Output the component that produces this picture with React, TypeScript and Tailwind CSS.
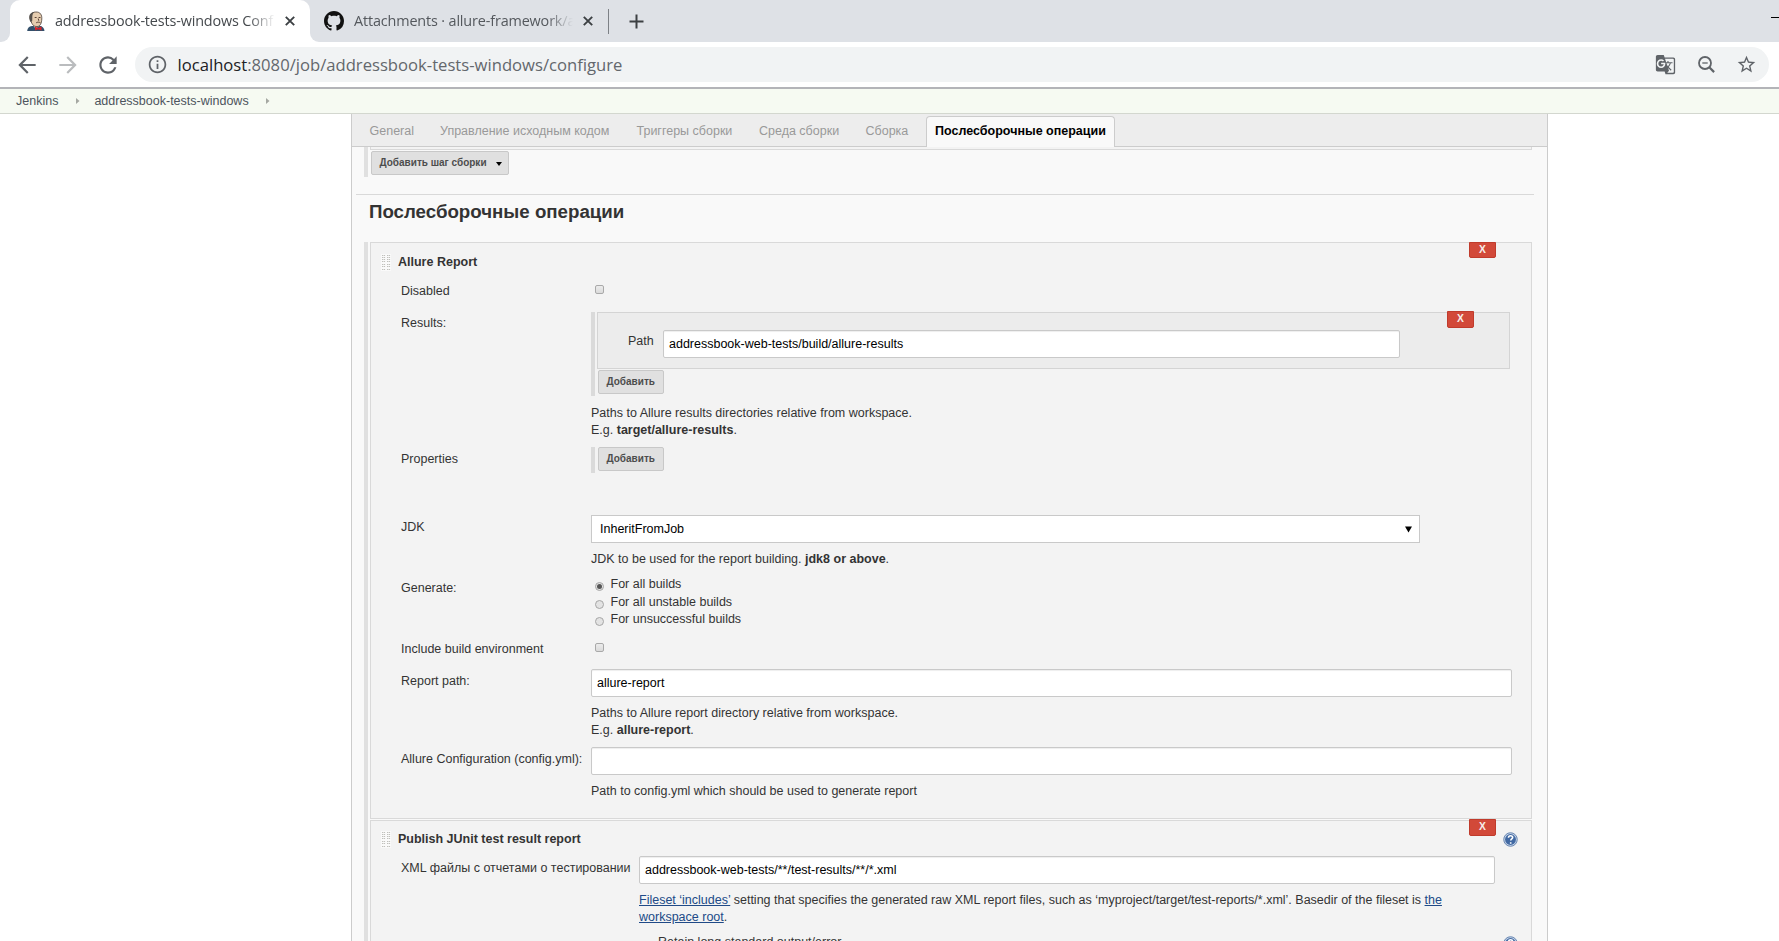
import type { ReactNode } from "react";
import {
  MdArrowBack,
  MdArrowForward,
  MdGTranslate,
  MdInfoOutline,
  MdRefresh,
  MdStarBorder,
} from "react-icons/md";

function GithubMark() {
  return (
    <svg viewBox="0 0 16 16" className="size-5 shrink-0" fill="#111">
      <path d="M8 0C3.58 0 0 3.58 0 8c0 3.54 2.29 6.53 5.47 7.59.4.07.55-.17.55-.38 0-.19-.01-.82-.01-1.49-2.01.37-2.53-.49-2.69-.94-.09-.23-.48-.94-.82-1.13-.28-.15-.68-.52-.01-.53.63-.01 1.08.58 1.23.82.72 1.21 1.87.87 2.33.66.07-.52.28-.87.51-1.07-1.78-.2-3.64-.89-3.64-3.95 0-.87.31-1.59.82-2.15-.08-.2-.36-1.02.08-2.12 0 0 .67-.21 2.2.82.64-.18 1.32-.27 2-.27.68 0 1.36.09 2 .27 1.53-1.04 2.2-.82 2.2-.82.44 1.1.16 1.92.08 2.12.51.56.82 1.27.82 2.15 0 3.07-1.87 3.75-3.65 3.95.29.25.54.73.54 1.48 0 1.07-.01 1.93-.01 2.2 0 .21.15.46.55.38A8.013 8.013 0 0016 8c0-4.42-3.58-8-8-8z" />
    </svg>
  );
}

function JenkinsIcon() {
  return (
    <svg viewBox="0 0 20 20" className="size-5 shrink-0">
      <path d="M1.200 20c.2-3 1.800-4.400 4.800-5l7.500-.3c3 .4 4.800 2.200 5 5.300z" fill="#34506b" />
      <path d="M6.500 13.500l3 4 4-2.500-1-3z" fill="#f0e6da" />
      <path d="M4.800 9.500C3.500 5 5 1.200 9.800 1c4.600-.2 6.200 3 6 7-.2 4-1.500 7.600-4.800 7.600-3.300 0-5-2-6.200-6.100z" fill="#e6cdb0" stroke="#4a3c34" strokeWidth=".8" />
      <path d="M4.600 11C1.800 6 3.200 1.500 8.500.7 6.800 2.200 6.200 3.800 6.300 6.500L6.200 10z" fill="#55504c" />
      <path d="M8.700 6.500h1.900M12.600 6.500h1.900M10.200 11.800c1.300-.9 2.800-.8 4.200-.1M12.200 7.500l.6 2.300" stroke="#5a4033" strokeWidth="1" fill="none" />
      <path d="M9 15.600l3 1.300 3.500-1.300v4L12 18.300l-3 1.300z" fill="#d8232a" />
    </svg>
  );
}

function CloseIcon({ className }: { className: string }) {
  return (
    <svg viewBox="0 0 10 10" className={`size-[10px] shrink-0 ${className}`}>
      <path d="M.8.8l8.400 8.400M9.200.8L.8 9.200" stroke="#3c4043" strokeWidth="1.900" />
    </svg>
  );
}

function PlusIcon({ className }: { className: string }) {
  return (
    <svg viewBox="0 0 15 15" className={`size-[15px] shrink-0 ${className}`}>
      <path d="M7.500.5v14M.5 7.500h14" stroke="#3c4043" strokeWidth="2" />
    </svg>
  );
}

function ZoomOutIcon({ className }: { className: string }) {
  return (
    <svg viewBox="0 0 17 17" className={`h-[17px] w-[17px] ${className}`} fill="none" stroke="currentColor">
      <circle cx="7" cy="7" r="6" strokeWidth="1.800" />
      <path d="M4.300 7h5.400" strokeWidth="1.300" />
      <path d="M11.300 11.300l4.800 4.800" strokeWidth="2.200" />
    </svg>
  );
}

function HelpIcon() {
  return (
    <svg viewBox="0 0 16 16" className="size-[15px]">
      <circle cx="8" cy="8" r="7.200" fill="#c9d6e8" stroke="#5f7fad" strokeWidth="1" />
      <circle cx="8" cy="8" r="5.800" fill="#4169a3" />
      <path d="M5.800 6.200c.1-1.500 1-2.200 2.300-2.200 1.300 0 2.200.7 2.200 1.900 0 1.500-2 1.600-2 3.200M8.200 10.800v1.600" fill="none" stroke="#fff" strokeWidth="1.700" />
    </svg>
  );
}

function Browser() {
  return (
    <header className="shrink-0">
      <div className="flex h-[42px] items-stretch bg-[#dee1e6] font-['Open_Sans',sans-serif] text-[14.4px] tracking-[-0.01em]">
        <div className="w-[10px] bg-white">
          <div className="h-full rounded-br-[9px] bg-[#dee1e6]" />
        </div>
        <div className="flex w-[300px] items-center rounded-t-[10px] bg-white pl-4 text-[#45494d]">
          <JenkinsIcon />
          <span className="-mt-px ml-[9px] w-[220px] overflow-hidden whitespace-nowrap [mask-image:linear-gradient(to_right,black_88%,transparent)]">
            addressbook-tests-windows Conf
          </span>
          <CloseIcon className="ml-[10px]" />
        </div>
        <div className="w-[10px] bg-white">
          <div className="h-full rounded-bl-[9px] bg-[#dee1e6]" />
        </div>
        <div className="flex items-center pl-1 text-[#54585d]">
          <GithubMark />
          <span className="-mt-px ml-[10px] w-[219px] overflow-hidden whitespace-nowrap [mask-image:linear-gradient(to_right,black_88%,transparent)]">
            Attachments · allure-framework/a
          </span>
          <CloseIcon className="ml-[10px]" />
          <div className="ml-[15px] h-[25px] w-px bg-[#7d8186]" />
          <PlusIcon className="ml-[20px]" />
        </div>
        <div className="mt-[17px] ml-auto h-px w-2 bg-black" />
      </div>
      <div className="flex h-[45px] items-center bg-white pl-[14px] text-[#5f6368]">
        <MdArrowBack className="size-[26px]" />
        <MdArrowForward className="ml-[15px] size-[26px] text-[#babcbe]" />
        <MdRefresh className="ml-[14px] size-[26px]" />
        <div className="ml-[14px] flex h-[35px] w-[1634px] items-center rounded-full bg-[#f1f3f4] pl-3 font-['Open_Sans',sans-serif] text-[16.65px]">
          <MdInfoOutline className="size-[21px]" />
          <span className="ml-[9.5px] whitespace-nowrap text-[#63676c]">
            <span className="text-[#202124]">localhost</span>:8080/job/addressbook-tests-windows/configure
          </span>
          <MdGTranslate className="ml-auto size-[21px]" />
          <ZoomOutIcon className="ml-[22px]" />
          <MdStarBorder className="mr-[12px] ml-[21px] size-[21px]" />
        </div>
      </div>
      <div className="h-[2px] bg-[#b3b4b8]" />
    </header>
  );
}

function Crumbs() {
  return (
    <nav className="flex h-[25px] shrink-0 items-center border-b border-[#d3d7cf] bg-[#f6faf2] pl-4 text-[#4d545d]">
      <span>Jenkins</span>
      <Chevron className="ml-[18px]" />
      <span className="ml-[14px]">addressbook-tests-windows</span>
      <Chevron className="ml-[17px]" />
    </nav>
  );
}

function Chevron({ className }: { className: string }) {
  return (
    <svg viewBox="0 0 4 6" className={`h-[6px] w-1 ${className}`}>
      <path d="M0 0l3.500 3L0 6z" fill="#a5a8a2" />
    </svg>
  );
}

function Handle() {
  return (
    <svg viewBox="0 0 10 17" className="h-[17px] w-[10px] shrink-0">
      <rect width="10" height="17" fill="#fafafa" />
      <path
        d="M1 1.500h3.500M6 1.500h3.500M1 3.500h3.500M6 3.500h3.500M1 5.500h3.500M6 5.500h3.500M1 7.500h3.500M6 7.500h3.500M1 10.500h3.500M6 10.500h3.500M1 12.500h3.500M6 12.500h3.500M1 15.500h3.500M6 15.500h3.500"
        stroke="#c0c0bc"
        strokeDasharray="1.300 .5"
      />
    </svg>
  );
}

function Remove({ className }: { className: string }) {
  return (
    <button
      className={`absolute flex w-[27px] items-center justify-center rounded-b-[2px] border border-[#c03b2c] bg-[#d24939] text-[10.3px] leading-none font-bold text-[#f7eeea] ${className}`}
    >
      X
    </button>
  );
}

function Button({ children, className }: { children: ReactNode; className: string }) {
  return (
    <button
      className={`flex h-6 items-center rounded-[2px] border border-[#c8c8c8] bg-[#e0e0e0] pb-px pl-[7.5px] text-[10px] font-bold whitespace-nowrap text-[#4d4d4d] ${className}`}
    >
      {children}
    </button>
  );
}

function Row({ label, labelClass, className, children }: { label: string; labelClass: string; className: string; children: ReactNode }) {
  return (
    <div className={`flex items-start pl-[30px] ${className}`}>
      <div className={`-mb-px shrink-0 whitespace-nowrap ${labelClass}`}>{label}</div>
      {children}
    </div>
  );
}

function Field({ value, className }: { value: string; className: string }) {
  return (
    <div className={`flex h-7 items-center rounded-[2px] border border-[#c9c9c9] bg-white pl-[5px] text-black shadow-[inset_0_1px_1px_#eee] ${className}`}>
      {value}
    </div>
  );
}

function Check() {
  return <div className="ml-1 size-[9px] rounded-[2px] border border-[#a9a9a9] bg-linear-to-b from-[#ececec] to-[#dadada]" />;
}

function Radio({ label, on, className }: { label: string; on?: boolean; className: string }) {
  return (
    <div className={`flex items-start ${className}`}>
      <div className="mt-[7px] ml-1 flex size-[9px] items-center justify-center rounded-full border border-[#a6a6a6] bg-[#e3e3e3]">
        {on && <div className="size-[5px] rounded-full bg-[#555]" />}
      </div>
      <span className="mt-px ml-[6.5px]">{label}</span>
    </div>
  );
}

const tabs = [
  { name: "General", cls: "w-[70.500px]" },
  { name: "Управление исходным кодом", cls: "w-[196.500px]" },
  { name: "Триггеры сборки", cls: "w-[122.500px]" },
  { name: "Среда сборки", cls: "w-[106.500px]" },
  { name: "Сборка", cls: "w-[60px]" },
];

function AllureReport() {
  return (
    <section className="relative h-[577px] w-[1162px] border border-[#d9d9d9] bg-[#f3f3f3] pt-[11px]">
      <Remove className="-top-px right-[35px] h-4" />
      <div className="flex pl-[10px] font-bold">
        <Handle />
        <span className="ml-[7px]">Allure Report</span>
      </div>
      <Row label="Disabled" labelClass="w-[190px] pt-px" className="mt-[11px]">
        <div className="mt-[3px]"><Check /></div>
      </Row>
      <Row label="Results:" labelClass="w-[190px] pt-[3px]" className="mt-[13px]">
        <div>
          <div className="h-[84px] w-[919px] border-l-4 border-[#dadada] pl-[2px]">
            <div className="relative flex h-[57px] w-[913px] items-start border border-[#d4d4d4] bg-[#ececec] pt-[17px] pl-[30px]">
              <Remove className="-top-[2px] right-[35px] h-[17px]" />
              <span className="mt-[3px] w-[35px]">Path</span>
              <Field className="w-[737px]" value="addressbook-web-tests/build/allure-results" />
            </div>
            <Button className="mt-px ml-px w-[66px]">Добавить</Button>
          </div>
          <p className="mt-[9px] -mb-px">
            Paths to Allure results directories relative from workspace.
            <br />
            E.g. <b>target/allure-results</b>.
          </p>
        </div>
      </Row>
      <Row label="Properties" labelClass="w-[190px] pt-1" className="mt-[9px]">
        <div className="h-[26px] border-l-4 border-[#dadada] pl-[3px]">
          <Button className="w-[66px]">Добавить</Button>
        </div>
      </Row>
      <Row label="JDK" labelClass="w-[190px] pt-1" className="mt-[42px]">
        <div>
          <div className="flex h-7 w-[829px] items-center justify-between border border-[#c9c9c9] bg-white pr-[7px] pl-2 text-black">
            InheritFromJob
            <svg viewBox="0 0 8 7" className="h-[7px] w-[7px]">
              <path d="M0 0h8L4 7z" />
            </svg>
          </div>
          <p className="mt-2 -mb-px">
            JDK to be used for the report building. <b>jdk8 or above</b>.
          </p>
        </div>
      </Row>
      <Row label="Generate:" labelClass="w-[190px] pt-[5px]" className="mt-2">
        <div>
          <Radio className="h-[18px]" on label="For all builds" />
          <Radio className="h-[17px]" label="For all unstable builds" />
          <Radio className="h-[17px]" label="For unsuccessful builds" />
        </div>
      </Row>
      <Row label="Include build environment" labelClass="w-[190px] pt-px" className="mt-[13px]">
        <div className="mt-[3px]"><Check /></div>
      </Row>
      <Row label="Report path:" labelClass="w-[190px] pt-1" className="mt-3">
        <div>
          <Field className="w-[921px]" value="allure-report" />
          <p className="mt-2 -mb-px">
            Paths to Allure report directory relative from workspace.
            <br />
            E.g. <b>allure-report</b>.
          </p>
        </div>
      </Row>
      <Row label="Allure Configuration (config.yml):" labelClass="w-[190px] pt-1" className="mt-[9px]">
        <div>
          <Field className="w-[921px]" value="" />
          <p className="mt-2">Path to config.yml which should be used to generate report</p>
        </div>
      </Row>
    </section>
  );
}

function JUnitReport() {
  return (
    <section className="relative mt-px h-[160px] w-[1162px] border border-[#d9d9d9] bg-[#f3f3f3] pt-[9px]">
      <Remove className="-top-[2px] right-[35px] h-[17px]" />
      <div className="flex h-[17px] pr-[13px] pl-[10px] font-bold">
        <div className="mt-px h-4"><Handle /></div>
        <span className="mt-px ml-[7px]">Publish JUnit test result report</span>
        <div className="mt-[2px] ml-auto h-[15px]"><HelpIcon /></div>
      </div>
      <Row label="XML файлы с отчетами о тестировании" labelClass="w-[238px] pt-1" className="mt-[9px]">
        <div>
          <Field className="w-[856px]" value="addressbook-web-tests/**/test-results/**/*.xml" />
          <p className="mt-2 w-[840px]">
            <a className="text-[#204a87] underline">Fileset ‘includes’</a> setting that specifies the generated raw XML report files, such as
            ‘myproject/target/test-reports/*.xml’. Basedir of the fileset is <a className="text-[#204a87] underline">the<br />workspace root</a>.
          </p>
        </div>
      </Row>
      <div className="mt-2 flex items-start justify-between pr-[13px] pl-[287px]">
        <span>Retain long standard output/error</span>
        <div className="mt-[2px]"><HelpIcon /></div>
      </div>
    </section>
  );
}

export default function App() {
  return (
    <div className="flex h-[941px] w-[1779px] flex-col overflow-hidden bg-white font-['Liberation_Sans',Arial,sans-serif] text-[12.500px] leading-[17px] text-[#333]">
      <Browser />
      <Crumbs />
      <main className="ml-[351px] h-[827px] w-[1197px] overflow-hidden border-x border-[#ccc] bg-[#f9f9f9]">
        <div className="flex h-[33px] bg-[#ededed] text-[#999]">
          <div className="flex w-[574px] border-b border-[#ccc] pl-[17.500px]">
            {tabs.map((t) => (
              <div key={t.name} className={`shrink-0 pt-[9px] whitespace-nowrap ${t.cls}`}>{t.name}</div>
            ))}
          </div>
          <div className="mt-[2px] w-[189px] rounded-t-[4px] border border-b-0 border-[#ccc] bg-[#f9f9f9] pt-[6px] text-center font-bold whitespace-nowrap text-black">
            Послесборочные операции
          </div>
          <div className="flex-1 border-b border-[#ccc]" />
        </div>
        <div className="ml-3 h-[30px] border-l-4 border-[#e0e0e0] pl-[2px]">
          <div className="h-[3px] w-[1162px] border border-t-0 border-[#d9d9d9] bg-[#f3f3f3]" />
          <Button className="mt-px ml-px w-[138px]">
            Добавить шаг сборки
            <svg viewBox="0 0 6 4" className="mt-[2px] ml-[9px] h-1 w-[6px]">
              <path d="M0 0h6L3 4z" fill="#000" />
            </svg>
          </Button>
        </div>
        <div className="mt-[17px] ml-1 w-[1178px] border-t border-[#d9d9d9]" />
        <h1 className="mt-[6px] ml-[17px] text-[18.700px] leading-[22px] font-bold">Послесборочные операции</h1>
        <div className="mt-[19px] ml-3 border-l-4 border-[#e0e0e0] pl-[2px]">
          <AllureReport />
          <JUnitReport />
        </div>
      </main>
    </div>
  );
}
